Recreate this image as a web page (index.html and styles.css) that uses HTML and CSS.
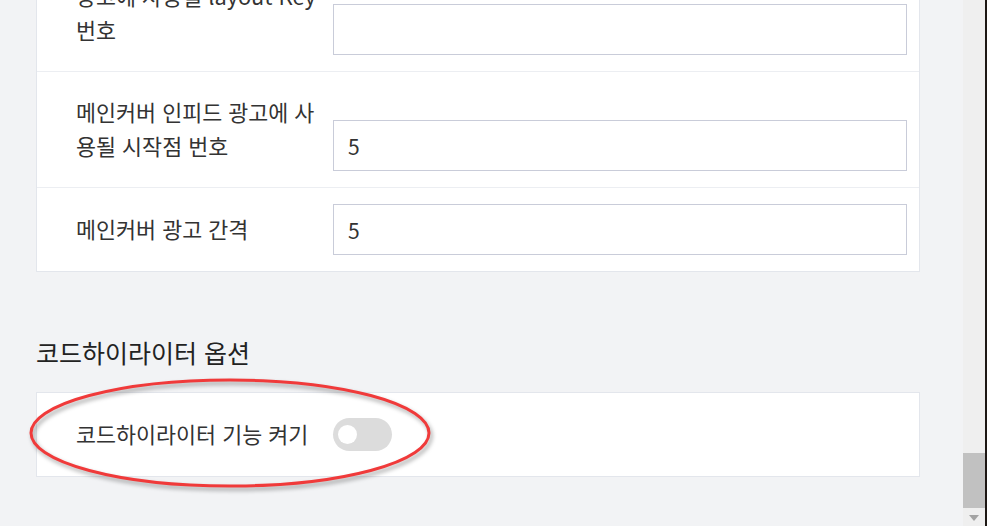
FILE: index.html
```html
<!DOCTYPE html>
<html lang="ko">
<head>
<meta charset="utf-8">
<title>설정</title>
<link rel="stylesheet" href="styles.css">
</head>
<body>
<div class="main">
  <div class="card card-top">
    <div class="row">
      <div class="label">광고에 사용될 layout Key 번호</div>
      <input class="field" type="text" value="">
    </div>
    <div class="row">
      <div class="label">메인커버 인피드 광고에 사용될 시작점 번호</div>
      <input class="field" type="text" value="5">
    </div>
    <div class="row">
      <div class="label">메인커버 광고 간격</div>
      <input class="field" type="text" value="5">
    </div>
  </div>

  <h2 class="section-title">코드하이라이터 옵션</h2>

  <div class="card">
    <div class="row row-toggle">
      <div class="label">코드하이라이터 기능 켜기</div>
      <span class="toggle"><span class="knob"></span></span>
    </div>
  </div>
</div>

<div class="scrollbar">
  <div class="track">
    <div class="thumb"></div>
    <div class="arrow"></div>
  </div>
  <div class="edge"></div>
</div>

<svg class="highlight" width="963" height="526" viewBox="0 0 963 526" xmlns="http://www.w3.org/2000/svg">
  <ellipse cx="230" cy="433" rx="199" ry="53" fill="none" stroke="#f03a3a" stroke-width="3"/>
</svg>
</body>
</html>
```

FILE: styles.css
```css
html, body {
  margin: 0;
  padding: 0;
}

body {
  position: relative;
  display: flex;
  width: 987px;
  height: 526px;
  overflow: hidden;
  font-family: "Noto Sans CJK KR", "Noto Sans", sans-serif;
  color: #333;
  background: #f2f3f5;
}

.main {
  flex: 0 0 963px;
  box-sizing: border-box;
  padding: 0 43px 0 36px;
  background: #f2f3f5;
}

.card {
  background: #fff;
  border: 1px solid #e3e6ec;
}

.card-top {
  margin-top: -45px;
}

.row {
  display: flex;
  align-items: center;
  padding: 16px 12px 16px 39px;
}

.row + .row {
  border-top: 1px solid #eceef2;
}

.label {
  flex: 0 0 248px;
  margin-right: 9px;
  padding: 7px 0 8px;
  font-size: 21.75px;
  line-height: 34px;
  color: #333;
}

.field {
  flex: 1;
  align-self: flex-end;
  box-sizing: border-box;
  height: 51px;
  margin: 0;
  padding: 0 14px;
  border: 1px solid #c9ccd9;
  border-radius: 0;
  background: #fff;
  font-family: "Noto Sans CJK KR", "Noto Sans", sans-serif;
  font-size: 21px;
  color: #333;
  outline: none;
}

.section-title {
  margin: 63px 0 23px;
  font-size: 25px;
  line-height: 34px;
  font-weight: 400;
  color: #222;
}

.row-toggle {
  padding-top: 17px;
  padding-bottom: 17px;
}

.toggle {
  display: flex;
  align-items: center;
  box-sizing: border-box;
  width: 59px;
  height: 33px;
  padding-left: 5px;
  border-radius: 17px;
  background: #dcdcdc;
}

.knob {
  width: 19px;
  height: 19px;
  border-radius: 50%;
  background: #fff;
}

.scrollbar {
  flex: 0 0 24px;
  display: flex;
}

.track {
  flex: 0 0 22px;
  display: flex;
  flex-direction: column;
  justify-content: flex-end;
  background: #efefef;
}

.thumb {
  height: 55px;
  margin-bottom: 7px;
  background: #c1c1c1;
}

.arrow {
  align-self: center;
  width: 0;
  height: 0;
  margin-bottom: 5px;
  border-left: 5px solid transparent;
  border-right: 5px solid transparent;
  border-top: 6px solid #a3a3a3;
}

.edge {
  flex: 0 0 2px;
  background: #1d1714;
}

.highlight {
  position: absolute;
  left: 0;
  top: 0;
  pointer-events: none;
  filter: drop-shadow(2px 3px 2px rgba(0, 0, 0, 0.35));
}
```
